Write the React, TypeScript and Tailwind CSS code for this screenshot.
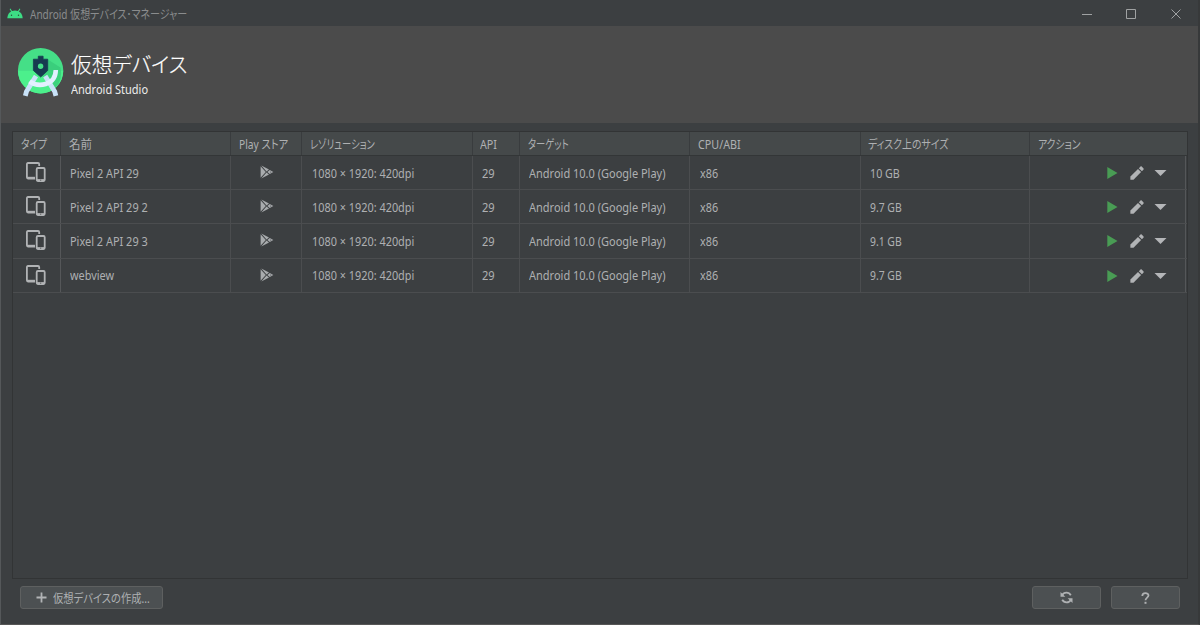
import { useLayoutEffect, useRef, useState } from 'react';

type FitProps = { width: number; children: string; className?: string };

/** A single line of text condensed or widened to a given advance width. */
function Fit({ width, children, className = '' }: FitProps) {
  const ref = useRef<HTMLSpanElement>(null);
  const [scale, setScale] = useState(1);
  useLayoutEffect(() => {
    if (ref.current) setScale(width / ref.current.offsetWidth);
  }, [width, children]);
  return (
    <span
      ref={ref}
      className={`inline-block shrink-0 origin-left whitespace-nowrap ${className}`}
      style={{ transform: `scaleX(${scale})` }}
    >
      {children}
    </span>
  );
}

function AndroidHead() {
  return (
    <svg className="h-[11px] w-4 shrink-0" viewBox="0 0 16 11" fill="none">
      <path d="M3.300 1.200 5 4M12.700 1.200 11 4" stroke="#3ddc84" strokeWidth="1.100" strokeLinecap="round" />
      <path d="M.3 10.200C.6 5.400 3.800 2.600 8 2.600s7.400 2.800 7.700 7.600z" fill="#3ddc84" />
      <circle cx="4.500" cy="7.300" r=".7" fill="#2c4a3c" />
      <circle cx="11.500" cy="7.300" r=".7" fill="#2c4a3c" />
    </svg>
  );
}

function StudioLogo() {
  return (
    <svg className="h-[52px] w-[48px] shrink-0" viewBox="0 0 48 52" fill="none">
      <circle cx="23.600" cy="23.800" r="22.700" fill="#45df87" />
      <path d="M1 23.800a22.600 22.700 0 0 0 45.200 0z" fill="#4cf08c" />
      <path d="m30 12 13.500 8.500A22.700 22.700 0 0 1 38 41.300L25 29z" fill="#37c878" opacity=".75" />
      <path d="M19 29 9.500 44.500l-1.200 4.400M28.200 29l9.500 15.500 1.200 4.400" stroke="#c9e2f8" strokeWidth="4.800" strokeLinejoin="round" />
      <path d="M12.500 34.300c8.500 6.300 26 4.500 26.300-11.300" stroke="#e3f0ff" strokeWidth="4.600" />
      <path d="M21.300 9.200h4.800v3h4.600v11.300L23.700 30l-7.300-6.500V12.200h4.900z" fill="#173b50" stroke="#173b50" strokeWidth=".8" strokeLinejoin="round" />
      <circle cx="23.600" cy="19.300" r="2.700" fill="#45df87" />
    </svg>
  );
}

function DevicesIcon() {
  return (
    <svg className="h-5 w-5" viewBox="0 0 20 20" fill="none" stroke="#b1b3b5">
      <path d="M13.200 4V2.300C13.200 1.500 12.700 1 12 1H2C1.300 1 .9 1.500.9 2.300v13c0 .8.4 1.200 1.100 1.200h7" strokeWidth="1.800" />
      <path d="M1 15.900h8" strokeWidth="2.200" />
      <rect x="10.700" y="6" width="8" height="13" rx="1.200" strokeWidth="1.800" />
      <path d="M10.700 18.100h8" strokeWidth="2" />
      <path d="M14.200 18.200h1" stroke="#3c3f41" strokeWidth=".9" />
    </svg>
  );
}

function PlayStoreIcon() {
  return (
    <svg className="h-[14px] w-[14px]" viewBox="0 0 14 14" fill="#a8abad">
      <path d="M.6 1.200v11.600L5.800 7z" />
      <path d="M1.300.5 9 4.600 6.500 6.400zM1.300 13.500 9 9.400 6.500 7.600z" />
      <path d="m9.800 5 3.500 2-3.500 2-2.500-2z" />
      <circle cx="10.700" cy="7" r=".6" fill="#4b4e50" />
    </svg>
  );
}

function PencilIcon() {
  return (
    <svg className="h-[14px] w-[14px]" viewBox="0 0 14 14" fill="#b1b3b5">
      <path d="M.4 10.600 8 3l3.100 3.100-7.600 7.600H.4z" />
      <path d="m8.800 2.200 1.500-1.500c.5-.5 1.100-.5 1.600 0l1.500 1.500c.5.5.5 1.100 0 1.600l-1.500 1.500z" />
    </svg>
  );
}

function RefreshIcon() {
  return (
    <svg className="h-[13px] w-[13px]" viewBox="0 0 13 13" fill="none" stroke="#afb1b3" strokeWidth="1.800">
      <path d="M2 4.300C4 .8 8.800.7 10.800 4.200M11 8.700C9 12.200 4.200 12.300 2.200 8.800" />
      <path d="M.5 1v4.800h4.800zM12.500 12V7.200H7.700z" fill="#afb1b3" stroke="none" />
    </svg>
  );
}

const grid = 'grid grid-cols-[48px_170px_71px_171px_47px_170px_171px_169px_157px]';

const headers: { label: string; width: number; pad: string }[] = [
  { label: 'タイプ', width: 26, pad: 'pl-[7.500px]' },
  { label: '名前', width: 23, pad: 'pl-[7.500px]' },
  { label: 'Play ストア', width: 49.5, pad: 'pl-[7.500px]' },
  { label: 'レゾリューション', width: 65, pad: 'pl-[8px]' },
  { label: 'API', width: 17, pad: 'pl-[7px]' },
  { label: 'ターゲット', width: 41, pad: 'pl-[7.500px]' },
  { label: 'CPU/ABI', width: 43, pad: 'pl-[7.500px]' },
  { label: 'ディスク上のサイズ', width: 80, pad: 'pl-[7px]' },
  { label: 'アクション', width: 42.5, pad: 'pl-[7.500px]' },
];

const devices = [
  { name: 'Pixel 2 API 29', nameWidth: 68.5, size: '10 GB', sizeWidth: 29.5 },
  { name: 'Pixel 2 API 29 2', nameWidth: 77.5, size: '9.7 GB', sizeWidth: 32 },
  { name: 'Pixel 2 API 29 3', nameWidth: 77.5, size: '9.1 GB', sizeWidth: 32 },
  { name: 'webview', nameWidth: 44.5, size: '9.7 GB', sizeWidth: 32 },
];

const cell = 'flex items-center border-r border-[#4b4d4f] pt-[2px]';

function DeviceRow({ device }: { device: (typeof devices)[number] }) {
  return (
    <div className={`${grid} h-[34.200px] w-[1174px] border-b border-[#4b4d4f]`}>
      <div className="flex items-center border-r border-[#555759] pb-px pl-[13px]"><DevicesIcon /></div>
      <div className={`${cell} pl-[9px]`}><Fit width={device.nameWidth}>{device.name}</Fit></div>
      <div className="flex items-center border-r border-[#4b4d4f] pb-px pl-[29px]"><PlayStoreIcon /></div>
      <div className={`${cell} pl-[10px]`}><Fit width={102.5}>1080 × 1920: 420dpi</Fit></div>
      <div className={`${cell} pl-[9px]`}><Fit width={13}>29</Fit></div>
      <div className={`${cell} pl-[9px]`}><Fit width={136.5}>Android 10.0 (Google Play)</Fit></div>
      <div className={`${cell} pl-[10px]`}><Fit width={18}>x86</Fit></div>
      <div className={`${cell} pl-[9px]`}><Fit width={device.sizeWidth}>{device.size}</Fit></div>
      <div className="mr-px flex items-center border-r border-[#555759] pt-px pl-[77px]">
        <svg className="h-3 w-[11px]" viewBox="0 0 11 12"><path d="M.3 0v12L10.500 6z" fill="#499c54" /></svg>
        <span className="ml-3"><PencilIcon /></span>
        <svg className="ml-[10px] h-[6px] w-[13px]" viewBox="0 0 13 6"><path d="M.5 0h12l-6 6z" fill="#b4b6b8" /></svg>
      </div>
    </div>
  );
}

const button = 'flex h-[23px] items-center rounded-[3px] border border-[#5e6060] bg-[#4c5052]';

export default function App() {
  return (
    <div className="flex h-[625px] w-[1200px] flex-col overflow-hidden border-r-2 border-b border-l border-r-[#37393a] border-b-[#565656] border-l-[#55585a] bg-[#3c3f41] font-['Noto_Sans','Noto_Sans_CJK_JP',sans-serif] text-[12px] leading-4 text-[#aeb0b2] [font-feature-settings:'palt']">
      <header className="flex h-[26px] shrink-0 items-center pt-px pl-[6px] text-[#8a8c8d]">
        <AndroidHead />
        <span className="ml-[7px] flex pt-[2px]">
          <Fit width={157}>Android 仮想デバイス･マネージャー</Fit>
        </span>
        <svg className="ml-auto h-3 w-[100px]" viewBox="0 0 100 12" fill="none" stroke="#a0a2a3">
          <path d="M0 6.500h10M44.500 1.500h9v9h-9zM89.500 1.500l9 9M98.500 1.500l-9 9" />
        </svg>
        <span className="w-4" />
      </header>

      <section className="flex h-[97px] shrink-0 bg-[#4b4b4b] pt-[21px] pl-[16px]">
        <StudioLogo />
        <div className="ml-[6px] flex flex-col text-[#ececec]">
          <span className="flex h-[35px] items-center text-[21px] leading-[35px] font-light text-white [-webkit-text-stroke:0.200px_white]">
            <Fit width={116}>仮想デバイス</Fit>
          </span>
          <span className="flex"><Fit width={77}>Android Studio</Fit></span>
        </div>
      </section>

      <main className="mt-2 ml-[11px] flex h-[448px] w-[1176px] shrink-0 flex-col border border-[#323435]">
        <div className={`${grid} h-[24px] border-b border-[#333637] bg-[#45494a]`}>
          {headers.map((h) => (
            <div key={h.label} className={`flex items-center border-r border-[#393c3e] pt-[2px] last:border-r-0 ${h.pad}`}>
              <Fit width={h.width}>{h.label}</Fit>
            </div>
          ))}
        </div>
        {devices.map((d) => <DeviceRow key={d.name} device={d} />)}
      </main>

      <footer className="mt-[7px] flex pr-[18px] pl-[19px]">
        <button className={`${button} w-[143px] pl-[15px]`}>
          <svg className="h-[11px] w-[11px] shrink-0" viewBox="0 0 11 11"><path d="M5.500.5v10M.5 5.500h10" stroke="#b1b3b5" strokeWidth="1.800" /></svg>
          <span className="ml-[6px] flex pt-[2px]"><Fit width={97}>仮想デバイスの作成...</Fit></span>
        </button>
        <button className={`${button} ml-auto w-[69px] justify-center`}><RefreshIcon /></button>
        <button className={`${button} ml-[10px] w-[69px] justify-center`}>
          <svg className="h-3 w-[9px]" viewBox="0 0 9 12" fill="none">
            <path d="M1.300 4C1.300.4 7.500.3 7.500 3.600 7.500 5.600 4.500 5.700 4.500 8.300" stroke="#afb1b3" strokeWidth="1.800" />
            <path d="M3.500 9.800h2v2h-2z" fill="#afb1b3" />
          </svg>
        </button>
      </footer>
    </div>
  );
}
